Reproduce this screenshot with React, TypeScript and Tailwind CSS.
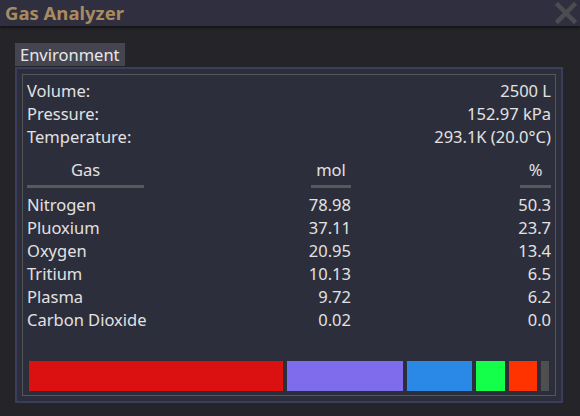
type Gas = {
  name: string;
  mol: string;
  pct: string;
};

const GASES: Gas[] = [
  { name: "Nitrogen", mol: "78.98", pct: "50.3" },
  { name: "Pluoxium", mol: "37.11", pct: "23.7" },
  { name: "Oxygen", mol: "20.95", pct: "13.4" },
  { name: "Tritium", mol: "10.13", pct: "6.5" },
  { name: "Plasma", mol: "9.72", pct: "6.2" },
  { name: "Carbon Dioxide", mol: "0.02", pct: "0.0" },
];

// segments of the composition bar, same order as the table
const SEGMENTS = [
  "w-[254px] bg-[#db1111]",
  "w-[117px] bg-[#7f6cec]",
  "w-[65px] bg-[#2a88e6]",
  "w-[29px] bg-[#14ff4a]",
  "w-[28px] bg-[#ff3300]",
  "w-[8px] bg-[#4f4f4f]",
];

const STATS = [
  { label: "Volume:", value: "2500 L" },
  { label: "Pressure:", value: "152.97 kPa" },
  { label: "Temperature:", value: "293.1K (20.0°C)" },
];

function CloseIcon() {
  return (
    <svg width="22" height="22" viewBox="0 0 22 22" className="mr-[3px]">
      <path
        d="M3 3 L19 19 M19 3 L3 19"
        stroke="#4b4c50"
        strokeWidth="4.5"
        strokeLinecap="square"
      />
    </svg>
  );
}

export default function App() {
  return (
    <div
      className="w-[580px] h-[416px] bg-[#252529] text-[#e2e2e2] overflow-hidden"
      style={{ fontFamily: '"Noto Sans", "Open Sans", sans-serif' }}
    >
      {/* title bar */}
      <div className="relative z-10 h-[26px] flex items-center justify-between pl-[5px] bg-[#2f2f3f] shadow-[0_2px_2px_rgba(0,0,0,0.45)]">
        <span className="text-[18.5px] font-bold leading-[26px] text-[#a88b5f]">
          Gas Analyzer
        </span>
        <CloseIcon />
      </div>

      <div className="px-[15px] pt-[17px]">
        {/* tab */}
        <div className="inline-block h-[23px] px-[5px] bg-[#454552] text-[16.5px] leading-[23px] text-[#e8e8e8]">
          Environment
        </div>

        {/* panel */}
        <div className="w-[548px] border-2 border-[#3a3e5c] bg-[#2d2e3b] p-[5px]">
          <div className="h-[322px] border border-[#55565a] px-[4px] pt-[4px] text-[16.5px] leading-[23px]">
            {STATS.map((s) => (
              <div key={s.label} className="flex justify-between h-[23px]">
                <span>{s.label}</span>
                <span>{s.value}</span>
              </div>
            ))}

            {/* table header */}
            <div className="mt-[10px] flex">
              <div className="flex-1">
                <div className="w-[117px]">
                  <div className="text-center h-[23px]">Gas</div>
                  <div className="mt-[4px] h-[3px] bg-[#595959]" />
                </div>
              </div>
              <div className="w-[60px] flex justify-end">
                <div className="w-[40px]">
                  <div className="text-center h-[23px]">mol</div>
                  <div className="mt-[4px] h-[3px] bg-[#595959]" />
                </div>
              </div>
              <div className="w-[150px]" />
              <div className="w-[50px] flex justify-end">
                <div className="w-[31px]">
                  <div className="text-center h-[23px]">%</div>
                  <div className="mt-[4px] h-[3px] bg-[#595959]" />
                </div>
              </div>
            </div>

            {/* gas rows */}
            <div className="mt-[5px]">
              {GASES.map((g) => (
                <div key={g.name} className="flex h-[23px]">
                  <span className="flex-1">{g.name}</span>
                  <span className="w-[60px] text-right">{g.mol}</span>
                  <span className="w-[150px]" />
                  <span className="w-[50px] text-right">{g.pct}</span>
                </div>
              ))}
            </div>

            {/* composition bar */}
            <div className="mt-[30px] px-[2px] flex gap-[4px] h-[30px]">
              {SEGMENTS.map((c, i) => (
                <div key={i} className={`h-full ${c}`} />
              ))}
            </div>
          </div>
        </div>
      </div>
    </div>
  );
}
